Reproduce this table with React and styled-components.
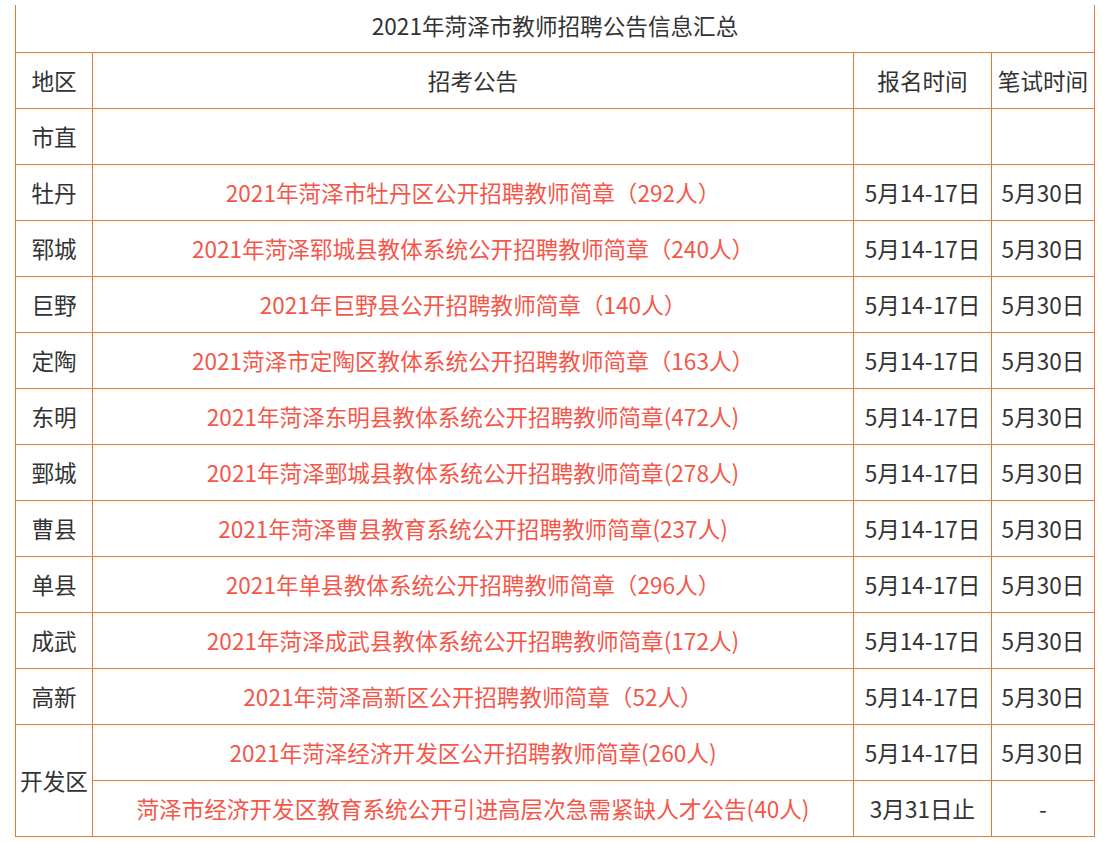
import React from 'react';
import styled, { createGlobalStyle } from 'styled-components';

const GlobalStyle = createGlobalStyle`
  html, body {
    margin: 0;
    padding: 0;
    background: #ffffff;
  }
  body {
    font-family: "Noto Sans CJK SC", "Microsoft YaHei", sans-serif;
  }
`;

const Page = styled.div`
  padding: 5px 0 0 15px;
  width: 1108px;
  height: 842px;
  box-sizing: border-box;
  overflow: hidden;
`;

const Table = styled.table`
  border-collapse: separate;
  border-spacing: 0;
  border-left: 1px solid #e07b39;
  table-layout: fixed;
  width: 1080px;
  font-size: 22.6px;
  color: #333333;
`;

const Col = styled.col`
  width: ${p => p.w}px;
`;

const Row = styled.tr`
  height: ${p => p.h || 56}px;
`;

const Cell = styled.td`
  box-sizing: border-box;
  height: ${p => p.h || 56}px;
  border-right: 1px solid #e07b39;
  border-bottom: 1px solid #e07b39;
  text-align: center;
  vertical-align: middle;
  padding: 1px 0 0;
  line-height: 1;
  white-space: nowrap;
  color: ${p => (p.link ? '#f4574a' : '#333333')};
`;

const TitleCell = styled(Cell)`
  padding: 0 0 4px;
`;

const rows = [
  { area: '市直', notice: '', signup: '', exam: '' },
  { area: '牡丹', notice: '2021年菏泽市牡丹区公开招聘教师简章（292人）', signup: '5月14-17日', exam: '5月30日' },
  { area: '郓城', notice: '2021年菏泽郓城县教体系统公开招聘教师简章（240人）', signup: '5月14-17日', exam: '5月30日' },
  { area: '巨野', notice: '2021年巨野县公开招聘教师简章（140人）', signup: '5月14-17日', exam: '5月30日' },
  { area: '定陶', notice: '2021菏泽市定陶区教体系统公开招聘教师简章（163人）', signup: '5月14-17日', exam: '5月30日' },
  { area: '东明', notice: '2021年菏泽东明县教体系统公开招聘教师简章(472人)', signup: '5月14-17日', exam: '5月30日' },
  { area: '鄄城', notice: '2021年菏泽鄄城县教体系统公开招聘教师简章(278人)', signup: '5月14-17日', exam: '5月30日' },
  { area: '曹县', notice: '2021年菏泽曹县教育系统公开招聘教师简章(237人)', signup: '5月14-17日', exam: '5月30日' },
  { area: '单县', notice: '2021年单县教体系统公开招聘教师简章（296人）', signup: '5月14-17日', exam: '5月30日' },
  { area: '成武', notice: '2021年菏泽成武县教体系统公开招聘教师简章(172人)', signup: '5月14-17日', exam: '5月30日' },
  { area: '高新', notice: '2021年菏泽高新区公开招聘教师简章（52人）', signup: '5月14-17日', exam: '5月30日' },
];

export default function App() {
  return (
    <Page>
      <GlobalStyle />
      <Table>
        <colgroup>
          <Col w={77} />
          <Col w={761} />
          <Col w={138} />
          <Col w={103} />
        </colgroup>
        <tbody>
          <Row h={48}>
            <TitleCell h={48} colSpan={4}>2021年菏泽市教师招聘公告信息汇总</TitleCell>
          </Row>
          <Row>
            <Cell>地区</Cell>
            <Cell>招考公告</Cell>
            <Cell>报名时间</Cell>
            <Cell>笔试时间</Cell>
          </Row>
          {rows.map(r => (
            <Row key={r.area}>
              <Cell>{r.area}</Cell>
              <Cell link>{r.notice}</Cell>
              <Cell>{r.signup}</Cell>
              <Cell>{r.exam}</Cell>
            </Row>
          ))}
          <Row>
            <Cell h={112} rowSpan={2}>开发区</Cell>
            <Cell link>2021年菏泽经济开发区公开招聘教师简章(260人)</Cell>
            <Cell>5月14-17日</Cell>
            <Cell>5月30日</Cell>
          </Row>
          <Row>
            <Cell link>菏泽市经济开发区教育系统公开引进高层次急需紧缺人才公告(40人)</Cell>
            <Cell>3月31日止</Cell>
            <Cell>-</Cell>
          </Row>
        </tbody>
      </Table>
    </Page>
  );
}
